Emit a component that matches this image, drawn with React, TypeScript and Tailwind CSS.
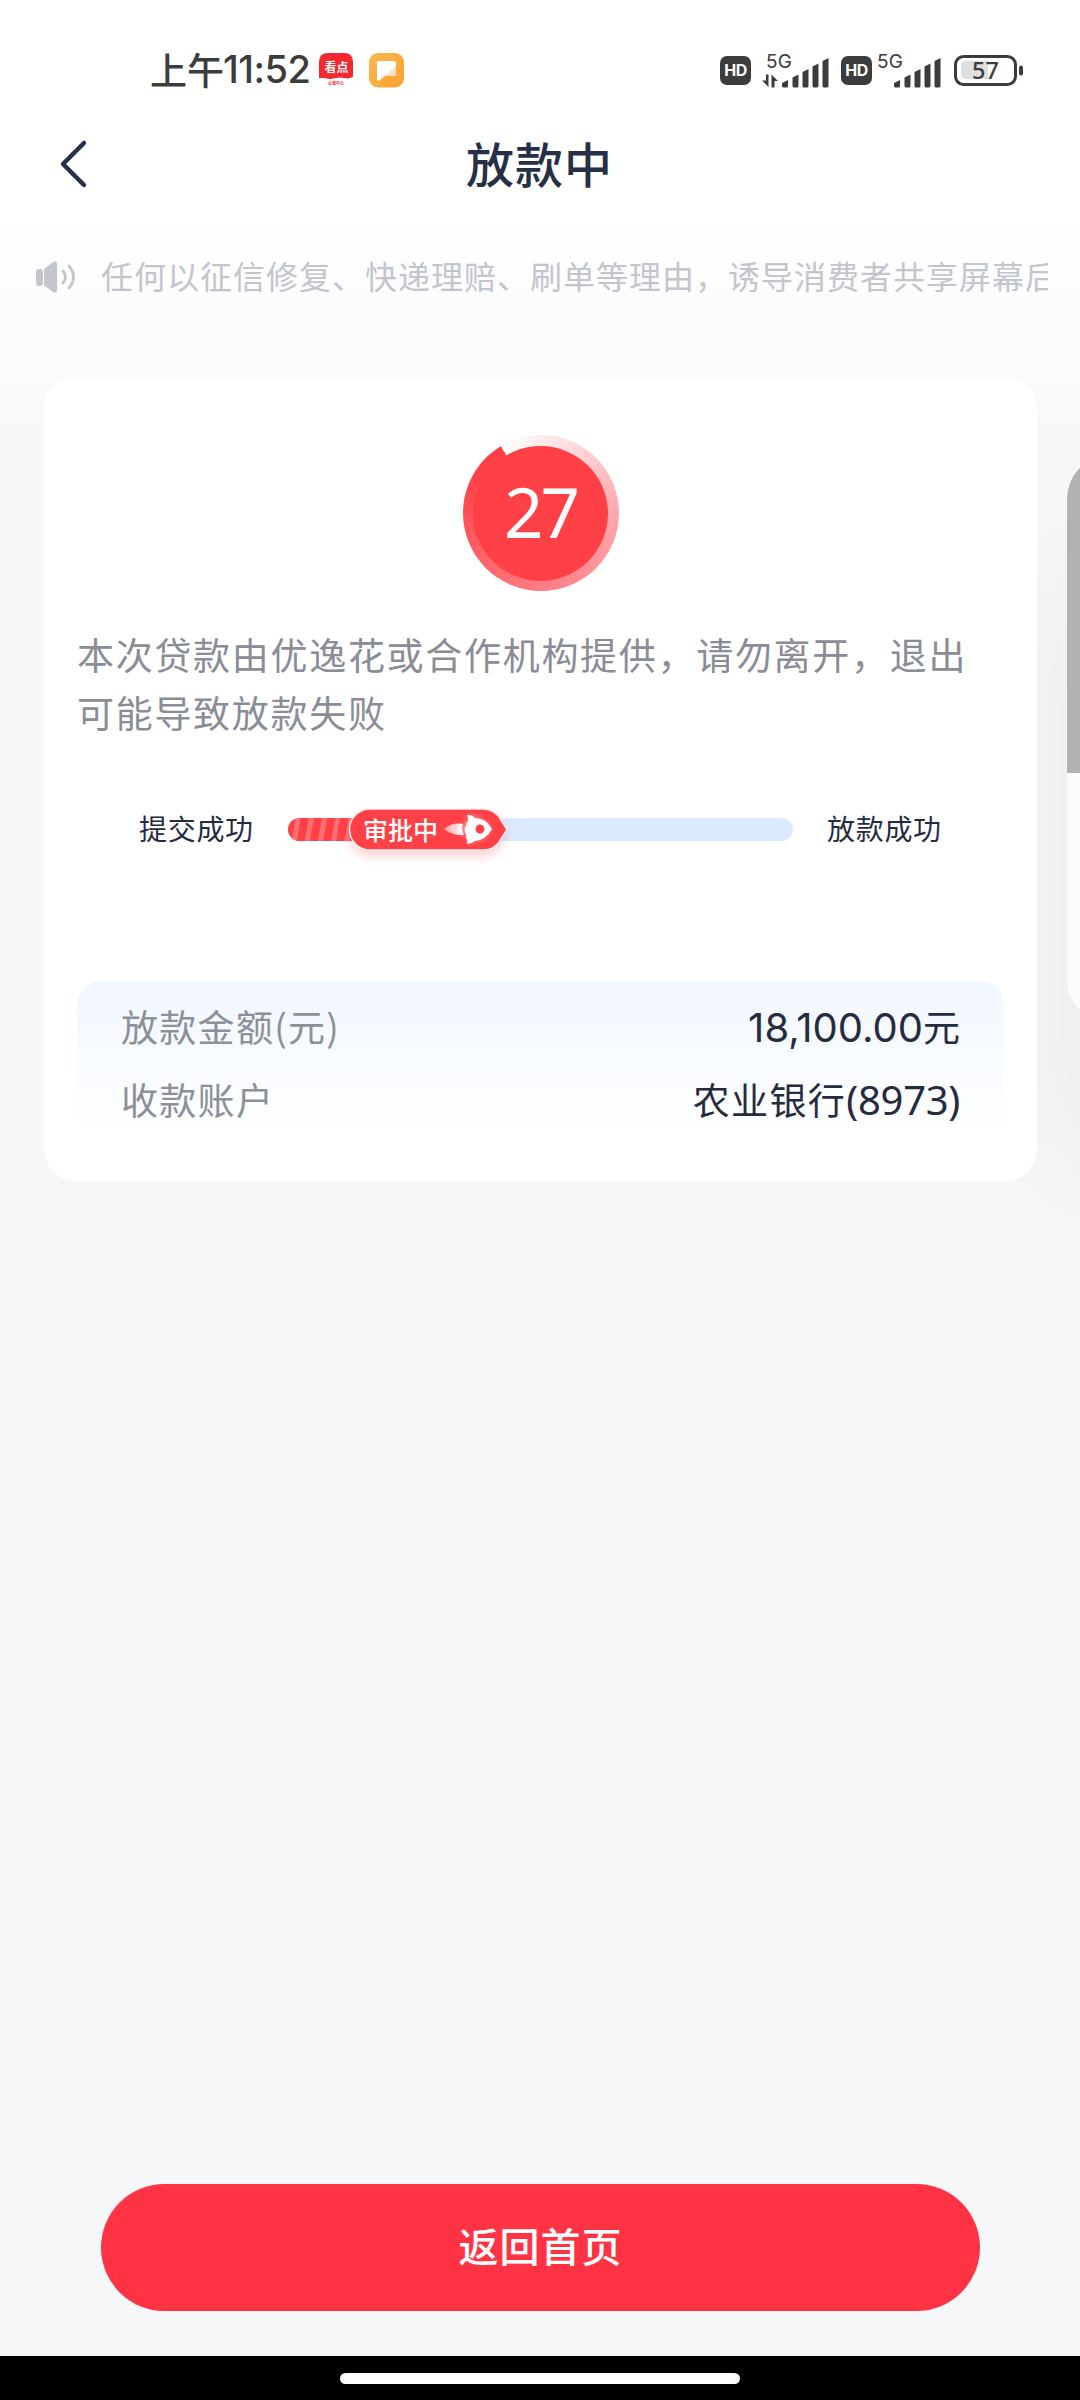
// App.tsx
const Hd = () => (
  <span className="flex h-[29px] w-[31px] items-center justify-center rounded-[7px] bg-[#3c3c3c] font-['Inter'] text-[16px] font-bold leading-none tracking-[-0.500px] text-white">
    HD
  </span>
);

const Signal = ({ data }: { data?: boolean }) => (
  <svg className="overflow-visible" width="70" height="36" viewBox="0 0 70 36" fill="#3c3c3c">
    <text x={data ? 5 : 0} y="15.500" fontFamily="Inter" fontSize="19" textLength="26">5G</text>
    {data && (
      <path d="M7.500 22.500v12.500L1 28.500h4V22.500zM10.500 35.500V22.500l6.500 6.500h-3.500v6.500z" />
    )}
    <g transform={data ? 'translate(21 0)' : 'translate(17 0)'}>
      <path d="M0 31l6-3v6q0 1.500-1.500 1.500h-3Q0 35.500 0 34zM10.500 25.500l6-3V34q0 1.500-1.500 1.500h-3q-1.500 0-1.500-1.500zM20.500 20l6-3V34q0 1.500-1.500 1.500h-3q-1.500 0-1.500-1.500zM30.500 14.500l6-3V34q0 1.500-1.500 1.500h-3q-1.500 0-1.500-1.500zM40.500 9l6-3V34q0 1.500-1.500 1.500h-3q-1.500 0-1.500-1.500z" />
    </g>
  </svg>
);

const StatusBar = () => (
  <div className="flex h-[140px] items-center pl-[150px] text-[#3c3c3c]">
    <div className="flex w-[169px] items-center pb-[3px] text-[37px] font-medium leading-[56px]">
      <span className="w-[73px] whitespace-nowrap">上午</span>
      <span className="font-['Inter'] text-[38px] tracking-[-0.500px]">11:52</span>
    </div>
    <svg width="35" height="35" viewBox="0 0 35 35">
      <rect width="34" height="34" rx="9" fill="#fff" />
      <path d="M0 25V9Q0 0 9 0h16q9 0 9 9v15l-5 1.500-8-1-10 1.500-6-1z" fill="#f4282f" />
      <text x="5.500" y="19" fontSize="12" fontWeight="700" fill="#fff" fontFamily="Noto Sans CJK SC">看点</text>
      <text x="9" y="31.500" fontSize="4" fontWeight="700" fill="#f4282f" fontFamily="Noto Sans CJK SC">认准中心</text>
    </svg>
    <svg className="ml-[15px]" width="36" height="35" viewBox="0 0 36 35">
      <defs>
        <linearGradient id="note" x1="0" y1="0" x2="1" y2="1">
          <stop offset="0" stopColor="#f9b950" />
          <stop offset="1" stopColor="#fba12e" />
        </linearGradient>
      </defs>
      <rect width="35" height="34.500" rx="9" fill="url(#note)" />
      <path d="M9 8h16q2 0 2 2v11q0 2-2 2h-9l-6 4.500q-2 1-2-1V9q0-1 1-1z" fill="#fff" />
      <path d="M27 13v8q0 2-2 2h-9z" fill="#fde3bd" />
    </svg>
    <div className="ml-[315px] flex items-center">
      <Hd />
      <div className="ml-[10px] w-[80px]"><Signal data /></div>
      <Hd />
      <div className="ml-[5px] w-[77px]"><Signal /></div>
      <svg width="70" height="31" viewBox="0 0 70 31">
        <rect x="1.500" y="1.500" width="60" height="28" rx="8" fill="#fff" stroke="#3c3c3c" strokeWidth="3" />
        <path d="M12 6h22v18H12q-5 0-5-5v-8q0-5 5-5z" fill="#dedede" />
        <text x="31.500" y="24" textAnchor="middle" fontSize="23.500" fill="#3c3c3c" fontFamily="Noto Sans" fontWeight="500">57</text>
        <rect x="65" y="10.500" width="4" height="10" rx="2" fill="#3c3c3c" />
      </svg>
    </div>
  </div>
);

const Rocket = () => (
  <svg width="52" height="36" viewBox="0 0 52 36">
    <defs>
      <filter id="glow" x="-30%" y="-50%" width="160%" height="200%">
        <feGaussianBlur stdDeviation="3" />
      </filter>
      <linearGradient id="flame">
        <stop offset="0" stopColor="#fff" stopOpacity="0.500" />
        <stop offset="1" stopColor="#fff" />
      </linearGradient>
    </defs>
    <path d="M10 18l12-4 5-10 15 7 6 7-6 7-15 7-5-10z" fill="#fff" opacity="0.450" filter="url(#glow)" />
    <path d="M1 18Q10 11 20 13q-2 5 1 11Q10 25 1 18z" fill="url(#flame)" />
    <path d="M24 4q4-1 8 3 11 0 17 11-6 11-17 12-4 3-8 3 1-4-1-6.500 1-3-1-5-1-4 1-7 0-3 2-4 1-3-1-6.500z" fill="#fff" />
    <circle cx="37" cy="18" r="4.500" fill="#ff4147" />
  </svg>
);

const Progress = () => (
  <div className="flex h-[42px] items-center text-[28px] leading-[42px] text-[#262b40]">
    <span className="ml-[95px] w-[149px] whitespace-nowrap pb-[3px] tracking-[0.700px]">提交成功</span>
    <div className="relative h-[23px] w-[505px] rounded-full bg-[#dceaff]">
      <div className="h-full w-[100px] rounded-l-full bg-[repeating-linear-gradient(100deg,#ff4147_0px,#ff4147_7px,#ff6e73_8px,#ff6e73_12px,#ff4147_13px)]" />
      <svg className="absolute left-0 -top-[18px] overflow-visible" width="230" height="60" viewBox="0 0 230 60">
        <defs>
          <filter id="pillShadow" x="-20%" y="-40%" width="140%" height="200%">
            <feDropShadow dx="0" dy="6" stdDeviation="4" floodColor="#ff4147" floodOpacity="0.220" />
          </filter>
        </defs>
        <path d="M82 9H195Q207 9 213 20L219 29.500L213 39Q207 50 195 50H82A20.500 20.500 0 0 1 82 9z" fill="#ff4147" stroke="#ffe9ea" strokeWidth="1.500" filter="url(#pillShadow)" />
      </svg>
      <div className="absolute -top-[9px] left-[75px] flex h-[41px] items-center text-[25px] font-medium text-white">
        <span className="w-[80px] whitespace-nowrap pb-px">审批中</span>
        <Rocket />
      </div>
    </div>
    <span className="ml-[34px] whitespace-nowrap pb-[3px] tracking-[0.700px]">放款成功</span>
  </div>
);

const App = () => {
  return (
    <div className="relative flex h-[2400px] w-[1080px] flex-col overflow-hidden bg-[linear-gradient(180deg,#ffffff_200px,#fbfbfc_360px,#f5f7f9_460px)] font-['Noto_Sans_CJK_SC',sans-serif]">
      {/* floating panel peeking in from the right edge */}
      <div className="absolute left-[1067px] top-[455px] h-[568px] w-[300px] overflow-hidden rounded-[44px] bg-[#fcfcfd] shadow-[0_130px_130px_30px_rgba(0,0,0,0.045)]">
        <div className="h-[318px] bg-[#b2b2b2]" />
      </div>

      <StatusBar />

      <header className="flex h-[48px] items-center text-[#262f45]">
        <svg className="ml-[58px]" width="32" height="50" viewBox="0 0 32 50" fill="none" stroke="currentColor" strokeWidth="4.500" strokeLinecap="round" strokeLinejoin="round">
          <path d="M26 4L5 25l21 21" />
        </svg>
        <h1 className="ml-[376px] pb-[5px] text-[48px] font-medium leading-[48px] tracking-[1px]">放款中</h1>
      </header>

      <div className="flex h-[178px] items-center pl-[35px] text-[#c3c5cd]">
        <svg width="42" height="34" viewBox="0 0 42 34" fill="currentColor">
          <rect x="1" y="9" width="7" height="17" rx="3" />
          <path d="M9 9l9-7q4-2 4 2v26q0 4-4 2l-9-7z" />
          <path d="M28 11q5 6 0 12M34 6q9 11 0 22" fill="none" stroke="currentColor" strokeWidth="2.800" strokeLinecap="round" />
        </svg>
        <p className="ml-[24px] w-[947px] overflow-hidden whitespace-nowrap pb-[4px] text-[32px] leading-[48px] tracking-[1px]">
          任何以征信修复、快递理赔、刷单等理由，诱导消费者共享屏幕后
        </p>
      </div>

      <main className="relative ml-[44px] mt-[11px] h-[804px] w-[993px] rounded-[32px] bg-white px-[33px] pt-[58px]">
        <div className="mx-auto flex size-[156px] items-center justify-center rounded-full bg-[conic-gradient(from_329deg,#ffffff_0%,#ffe4e6_12%,#ffb0b5_30%,#ff8289_55%,#ff6066_75%,#ff4147_92%)]">
          <div className="flex size-[135px] items-center justify-center rounded-full bg-[#ff4147] pb-[4px] font-['Noto_Sans'] text-[69px] leading-none tracking-[-3px] text-white">
            27
          </div>
        </div>

        <p className="mt-[34px] whitespace-nowrap text-[37px] leading-[58px] tracking-[1.700px] text-[#8a8c96]">
          本次贷款由优逸花或合作机构提供，请勿离开，退出
          <br />
          可能导致放款失败
        </p>

        <div className="-ml-[33px] mt-[67px]"><Progress /></div>

        <div className="mt-[131px] h-[155px] w-[927px] rounded-t-[24px] bg-gradient-to-b from-[#f1f7ff] to-white pl-[44px] pr-[44px] pt-[9px] text-[37px] leading-[73px] text-[#262b40]">
          <div className="flex h-[73px] justify-between">
            <span className="tracking-[1.300px] text-[#8b9099]">放款金额(元)</span>
            <span><span className="font-['Inter'] text-[40px]">18,100.00</span>元</span>
          </div>
          <div className="flex h-[73px] justify-between">
            <span className="tracking-[1.300px] text-[#8b9099]">收款账户</span>
            <span><span className="tracking-[1.400px]">农业银行</span><span className="font-['Noto_Sans'] text-[40px] tracking-[-0.300px]">(8973)</span></span>
          </div>
        </div>
      </main>

      <button className="ml-[101px] mt-auto h-[127px] w-[879px] shrink-0 rounded-full bg-[#ff3344] pb-[5px] text-[40px] font-medium tracking-[1px] text-white">
        返回首页
      </button>

      <div className="mt-[45px] flex h-[44px] shrink-0 justify-center bg-black pt-[17px]">
        <div className="h-[11px] w-[400px] rounded-full bg-white" />
      </div>
    </div>
  );
};

export default App;
